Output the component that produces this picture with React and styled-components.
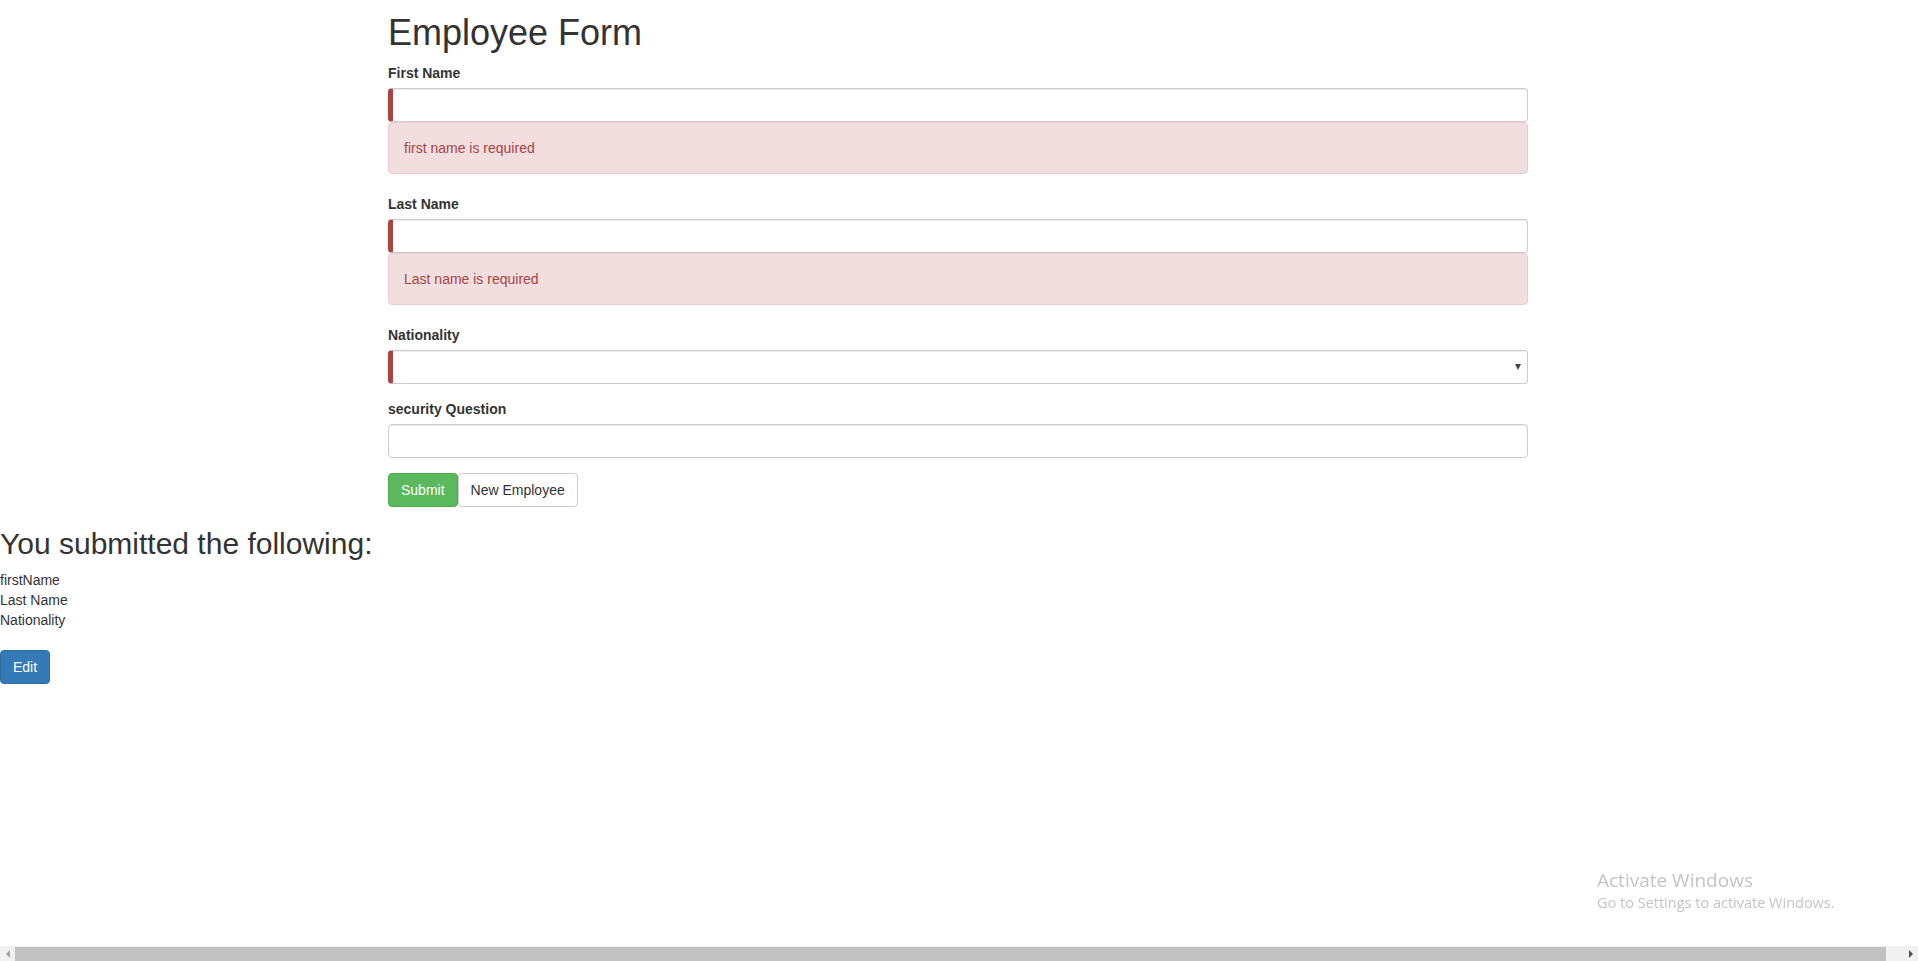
import React from "react";
import styled, { createGlobalStyle, css } from "styled-components";

const GlobalStyle = createGlobalStyle`
  html, body {
    margin: 0;
    padding: 0;
    background: #fff;
    overflow: hidden;
  }
  body {
    font-family: "Liberation Sans", Arial, Helvetica, sans-serif;
    font-size: 14px;
    line-height: 20px;
    color: #333;
  }
  * {
    box-sizing: border-box;
  }
`;

const fields = [
  { id: "firstName", label: "First Name", error: "first name is required" },
  { id: "lastName", label: "Last Name", error: "Last name is required" },
];

const submitted = ["firstName", "Last Name", "Nationality"];

const App = () => {
  return (
    <PageS>
      <GlobalStyle />
      <ContainerS>
        <TitleS>Employee Form</TitleS>
        <form onSubmit={(e) => e.preventDefault()}>
          {fields.map((field) => (
            <FormGroupS key={field.id}>
              <LabelS htmlFor={field.id}>{field.label}</LabelS>
              <InputS id={field.id} type="text" invalid />
              <AlertS>{field.error}</AlertS>
            </FormGroupS>
          ))}

          <FormGroupS>
            <LabelS htmlFor="nationality">Nationality</LabelS>
            <SelectWrapS>
              <SelectS id="nationality" invalid defaultValue="">
                <option value="" />
              </SelectS>
            </SelectWrapS>
          </FormGroupS>

          <FormGroupS>
            <LabelS htmlFor="securityQuestion">security Question</LabelS>
            <InputS id="securityQuestion" type="text" />
          </FormGroupS>

          <ButtonRowS>
            <ButtonS type="submit" variant="success">
              Submit
            </ButtonS>
            <ButtonS type="button">New Employee</ButtonS>
          </ButtonRowS>
        </form>
      </ContainerS>

      <ResultS>
        <SubTitleS>You submitted the following:</SubTitleS>
        {submitted.map((line) => (
          <ResultLineS key={line}>{line}</ResultLineS>
        ))}
        <EditRowS>
          <ButtonS type="button" variant="primary">
            Edit
          </ButtonS>
        </EditRowS>
      </ResultS>

      <WatermarkS>
        <WatermarkTitleS>Activate Windows</WatermarkTitleS>
        <WatermarkTextS>Go to Settings to activate Windows.</WatermarkTextS>
      </WatermarkS>

      <ScrollbarS>
        <ScrollArrowS>
          <svg width="6" height="8" viewBox="0 0 6 8">
            <path d="M5 0 L1 4 L5 8 Z" fill="#a3a3a3" />
          </svg>
        </ScrollArrowS>
        <ScrollThumbS />
        <ScrollArrowS>
          <svg width="6" height="8" viewBox="0 0 6 8">
            <path d="M1 0 L5 4 L1 8 Z" fill="#505050" />
          </svg>
        </ScrollArrowS>
      </ScrollbarS>
    </PageS>
  );
};

export default App;

const PageS = styled.div`
  min-height: 961px;
  position: relative;
`;

const ContainerS = styled.div`
  width: 1170px;
  margin: 0 auto;
  padding: 0 16px 0 14px;
`;

const TitleS = styled.h1`
  font-size: 36px;
  font-weight: 500;
  line-height: 39.6px;
  margin: 13px 0 10px;
  color: #333;
`;

const FormGroupS = styled.div`
  margin-bottom: 15px;
`;

const LabelS = styled.label`
  display: block;
  font-weight: bold;
  line-height: 20px;
  margin-bottom: 5px;
`;

const controlStyle = css`
  display: block;
  width: 100%;
  height: 34px;
  padding: 6px 12px;
  font-family: inherit;
  font-size: 14px;
  line-height: 20px;
  color: #555;
  background: #fff;
  border: 1px solid #ccc;
  border-radius: 4px;
  box-shadow: inset 0 1px 1px rgba(0, 0, 0, 0.075);
  outline: none;
  ${(p) =>
    p.invalid &&
    css`
      border-left: 5px solid #a94442;
    `}
`;

const InputS = styled.input.withConfig({
  shouldForwardProp: (prop) => prop !== "invalid",
})`
  ${controlStyle}
`;

const SelectWrapS = styled.div`
  position: relative;

  &::after {
    content: "";
    position: absolute;
    right: 7px;
    top: 14px;
    border-left: 3px solid transparent;
    border-right: 3px solid transparent;
    border-top: 6px solid #444;
    pointer-events: none;
  }
`;

const SelectS = styled.select.withConfig({
  shouldForwardProp: (prop) => prop !== "invalid",
})`
  ${controlStyle}
  appearance: none;
  -webkit-appearance: none;
`;

const AlertS = styled.div`
  padding: 15px;
  margin-bottom: 20px;
  color: #a94442;
  background: #f2dede;
  border: 1px solid #ebccd1;
  border-radius: 4px;
  line-height: 20px;
`;

const ButtonRowS = styled.div`
  display: flex;
`;

const variants = {
  default: css`
    color: #333;
    background: #fff;
    border-color: #ccc;
  `,
  success: css`
    color: #fff;
    background: #5cb85c;
    border-color: #4cae4c;
  `,
  primary: css`
    color: #fff;
    background: #337ab7;
    border-color: #2e6da4;
  `,
};

const ButtonS = styled.button`
  display: inline-block;
  height: 34px;
  padding: 6px 12px;
  font-family: inherit;
  font-size: 14px;
  line-height: 20px;
  border: 1px solid;
  border-radius: 4px;
  cursor: pointer;
  ${(p) => variants[p.variant || "default"]}
`;

const ResultS = styled.div`
  padding-top: 20px;
`;

const SubTitleS = styled.h2`
  font-size: 30px;
  font-weight: 500;
  line-height: 33px;
  margin: 0 0 10px;
  color: #333;
`;

const ResultLineS = styled.div`
  line-height: 20px;
`;

const EditRowS = styled.div`
  margin-top: 20px;
`;

const WatermarkS = styled.div`
  position: fixed;
  left: 1597px;
  top: 868px;
  font-family: "Open Sans", "Noto Sans", sans-serif;
  color: #c4c4c4;
  pointer-events: none;
`;

const WatermarkTitleS = styled.div`
  font-size: 19px;
  line-height: 25px;
`;

const WatermarkTextS = styled.div`
  font-size: 14.5px;
  line-height: 19px;
`;

const ScrollbarS = styled.div`
  position: fixed;
  left: 0;
  right: 0;
  bottom: 0;
  height: 15px;
  display: flex;
  align-items: stretch;
  background: #f1f1f1;
`;

const ScrollArrowS = styled.div`
  width: 15px;
  display: flex;
  align-items: center;
  justify-content: center;
`;

const ScrollThumbS = styled.div`
  flex: 1;
  margin: 1px 17px 0 0;
  background: #c1c1c1;
`;
